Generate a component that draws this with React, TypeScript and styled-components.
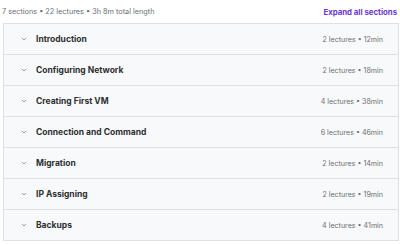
import React from "react";
import styled, { createGlobalStyle } from "styled-components";

const GlobalStyle = createGlobalStyle`
  html, body {
    margin: 0;
    padding: 0;
    background: #fff;
  }
  body {
    font-family: Inter, "Liberation Sans", sans-serif;
  }
`;

const Page = styled.div`
  width: 400px;
  padding: 0 1px 0 3px;
  box-sizing: border-box;
`;

const Header = styled.div`
  display: flex;
  justify-content: space-between;
  align-items: center;
  height: 23px;
  margin-left: -1px;
  margin-right: 2px;
`;

const Summary = styled.span`
  font-size: 7.3px;
  color: #6a6f73;
`;

const ExpandAll = styled.button`
  border: none;
  background: none;
  padding: 0;
  font-family: inherit;
  font-size: 7.8px;
  font-weight: 700;
  color: #6a35d4;
  cursor: pointer;
`;

const Sections = styled.div`
  border: 1px solid #dde1e4;
  border-bottom: none;
`;

const Row = styled.div`
  display: flex;
  align-items: center;
  height: 30px;
  padding: 0 15px 0 17px;
  background: #f7f9fa;
  border-bottom: 1px solid #dde1e4;
`;

const Chevron = styled.svg`
  width: 6px;
  height: 6px;
  margin-right: 9px;
  color: #6a6f73;
`;

const Title = styled.span`
  flex: 1;
  font-size: 8.5px;
  font-weight: 700;
  color: #2d2f31;
`;

const Meta = styled.span`
  font-size: 7.1px;
  color: #6a6f73;
`;

const sections = [
  { title: "Introduction", lectures: 2, length: "12min" },
  { title: "Configuring Network", lectures: 2, length: "18min" },
  { title: "Creating First VM", lectures: 4, length: "38min" },
  { title: "Connection and Command", lectures: 6, length: "46min" },
  { title: "Migration", lectures: 2, length: "14min" },
  { title: "IP Assigning", lectures: 2, length: "19min" },
  { title: "Backups", lectures: 4, length: "41min" },
];

const App = () => {
  return (
    <Page>
      <GlobalStyle />
      <Header>
        <Summary>7 sections • 22 lectures • 3h 8m total length</Summary>
        <ExpandAll>Expand all sections</ExpandAll>
      </Header>
      <Sections>
        {sections.map((s) => (
          <Row key={s.title}>
            <Chevron viewBox="0 0 12 12" fill="none">
              <path d="M2 4l4 4 4-4" stroke="currentColor" strokeWidth="1.3" />
            </Chevron>
            <Title>{s.title}</Title>
            <Meta>
              {s.lectures} lectures • {s.length}
            </Meta>
          </Row>
        ))}
      </Sections>
    </Page>
  );
};

export default App;
